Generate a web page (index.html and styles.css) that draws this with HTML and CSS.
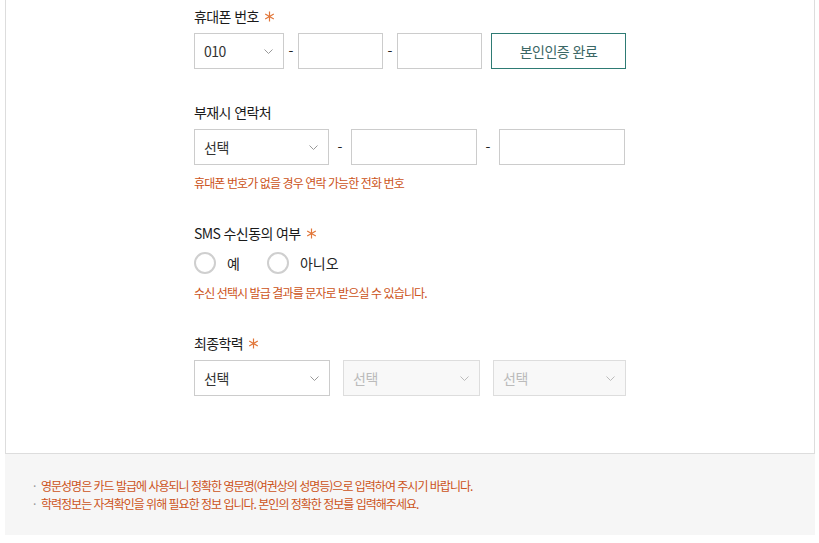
FILE: index.html
```html
<!DOCTYPE html>
<html lang="ko">
<head>
<meta charset="utf-8">
<link rel="stylesheet" href="styles.css">
</head>
<body>
<div class="page">
  <div class="panel">
    <div class="form">
      <section class="field f1">
        <div class="label">휴대폰 번호 <svg class="req" width="11" height="11" viewBox="0 0 11 11"><path d="M5.5 0.5V10.5M1.2 3L9.8 8M1.2 8L9.8 3" stroke="#e2773a" stroke-width="1.2" fill="none"/></svg></div>
        <div class="row">
          <div class="select w90"><span>010</span><svg class="chev" width="9" height="5" viewBox="0 0 9 5"><path d="M0.5 0.5L4.5 4.5L8.5 0.5" fill="none" stroke="#999" stroke-width="1"/></svg></div>
          <span class="dash">-</span>
          <input class="input w85" type="text">
          <span class="dash">-</span>
          <input class="input w85" type="text">
          <button class="btn-verify" type="button">본인인증 완료</button>
        </div>
      </section>

      <section class="field f2">
        <div class="label">부재시 연락처</div>
        <div class="row">
          <div class="select w135"><span>선택</span><svg class="chev" width="9" height="5" viewBox="0 0 9 5"><path d="M0.5 0.5L4.5 4.5L8.5 0.5" fill="none" stroke="#999" stroke-width="1"/></svg></div>
          <span class="dash wide">-</span>
          <input class="input w126" type="text">
          <span class="dash wide">-</span>
          <input class="input w126" type="text">
        </div>
        <p class="help">휴대폰 번호가 없을 경우 연락 가능한 전화 번호</p>
      </section>

      <section class="field f3">
        <div class="label">SMS 수신동의 여부 <svg class="req" width="11" height="11" viewBox="0 0 11 11"><path d="M5.5 0.5V10.5M1.2 3L9.8 8M1.2 8L9.8 3" stroke="#e2773a" stroke-width="1.2" fill="none"/></svg></div>
        <div class="radios">
          <label class="radio"><span class="circle"></span><span>예</span></label>
          <label class="radio"><span class="circle"></span><span>아니오</span></label>
        </div>
        <p class="help">수신 선택시 발급 결과를 문자로 받으실 수 있습니다.</p>
      </section>

      <section class="field f4">
        <div class="label">최종학력 <svg class="req" width="11" height="11" viewBox="0 0 11 11"><path d="M5.5 0.5V10.5M1.2 3L9.8 8M1.2 8L9.8 3" stroke="#e2773a" stroke-width="1.2" fill="none"/></svg></div>
        <div class="row edu">
          <div class="select w136"><span>선택</span><svg class="chev" width="9" height="5" viewBox="0 0 9 5"><path d="M0.5 0.5L4.5 4.5L8.5 0.5" fill="none" stroke="#999" stroke-width="1"/></svg></div>
          <div class="select w137 disabled"><span>선택</span><svg class="chev" width="9" height="5" viewBox="0 0 9 5"><path d="M0.5 0.5L4.5 4.5L8.5 0.5" fill="none" stroke="#bbb" stroke-width="1"/></svg></div>
          <div class="select w133 disabled"><span>선택</span><svg class="chev" width="9" height="5" viewBox="0 0 9 5"><path d="M0.5 0.5L4.5 4.5L8.5 0.5" fill="none" stroke="#bbb" stroke-width="1"/></svg></div>
        </div>
      </section>
    </div>
  </div>
  <div class="notes">
    <ul>
      <li><span class="dot">·</span><span>영문성명은 카드 발급에 사용되니 정확한 영문명(여권상의 성명등)으로 입력하여 주시기 바랍니다.</span></li>
      <li><span class="dot">·</span><span>학력정보는 자격확인을 위해 필요한 정보 입니다. 본인의 정확한 정보를 입력해주세요.</span></li>
    </ul>
  </div>
</div>
</body>
</html>
```

FILE: styles.css
```css
* { box-sizing: border-box; }
html, body { margin: 0; padding: 0; background: #fff; }
body {
  font-family: "Noto Sans CJK KR", "Noto Sans", sans-serif;
  color: #222;
  width: 819px;
  height: 543px;
  overflow: hidden;
}
.page { padding-left: 5px; width: 815px; }
.panel {
  border: 1px solid #ddd;
  border-top: none;
  background: #fff;
  padding: 6px 0 57px 188px;
}
.form { width: 432px; }
.f2 { margin-top: 33px; }
.f3 { margin-top: 31px; }
.f4 { margin-top: 31px; }
.label {
  display: flex;
  align-items: center;
  font-size: 14px;
  line-height: 20px;
  letter-spacing: -0.6px;
  color: #1a1a1a;
  margin-bottom: 7px;
  white-space: pre;
}
.f3 .label { margin-bottom: 9px; }
.f4 .label { margin-bottom: 7px; }
.req { display: block; margin-left: 2px; margin-top: 1px; }
.row { display: flex; align-items: center; height: 36px; }
.select {
  height: 36px;
  border: 1px solid #ccc;
  background: #fff;
  display: flex;
  align-items: center;
  justify-content: space-between;
  padding: 0 10px 0 9px;
  font-size: 14px;
  letter-spacing: -0.5px;
  color: #333;
}
.select.disabled { background: #f8f8f8; border-color: #ddd; color: #bbb; }
.chev { display: block; }
.input {
  height: 36px;
  border: 1px solid #ccc;
  background: #fff;
  margin: 0;
  padding: 0;
  font: inherit;
}
.w90 { width: 90px; }
.w85 { width: 85px; }
.w135 { width: 135px; }
.w126 { width: 126px; }
.w136 { width: 136px; }
.w137 { width: 137px; }
.w133 { width: 133px; }
.dash {
  width: 14px;
  text-align: center;
  font-size: 14px;
  color: #222;
}
.dash.wide { width: 22px; }
.row.edu { gap: 13px; }
.btn-verify {
  margin-left: 9px;
  width: 135px;
  height: 36px;
  border: 1px solid #2e7b74;
  background: #fff;
  color: #3a6765;
  font-family: inherit;
  font-size: 14px;
  letter-spacing: -0.5px;
  padding: 0;
}
.help {
  margin: 9px 0 0;
  font-size: 12px;
  line-height: 18px;
  letter-spacing: -0.9px;
  color: #cc5320;
}
.radios { display: flex; gap: 27px; height: 22px; align-items: center; }
.radio {
  display: flex;
  align-items: center;
  gap: 11px;
  font-size: 14px;
  color: #222;
}
.circle {
  width: 22px;
  height: 22px;
  border: 2px solid #cfcfcf;
  border-radius: 50%;
  background: #fff;
}
.radios + .help { margin-top: 10px; }
.notes {
  width: 810px;
  background: #f6f6f6;
  padding: 23px 0 22px 28px;
}
.notes ul { margin: 0; padding: 0; list-style: none; }
.notes li {
  display: flex;
  font-size: 12px;
  line-height: 18px;
  letter-spacing: -1px;
  color: #cc5320;
}
.dot { width: 8px; color: #999; }
```
